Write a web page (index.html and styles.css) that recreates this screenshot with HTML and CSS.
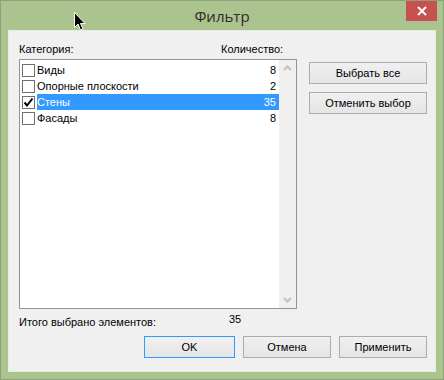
FILE: index.html
```html
<!DOCTYPE html>
<html lang="ru">
<head>
    <meta charset="UTF-8">
    <title>Фильтр</title>
    <link rel="stylesheet" href="styles.css">
</head>
<body>
    <div class="window">
        <div class="titlebar">
            <span class="title">Фильтр</span>
            <div class="close">
                <svg width="10" height="10" viewBox="0 0 10 10"><path d="M1 1 L9 9 M9 1 L1 9" stroke="#fff" stroke-width="2"/></svg>
            </div>
        </div>
        <div class="client">
            <div class="main">
                <div class="list-panel">
                    <div class="list-head">
                        <span class="head-cat">Категория:</span>
                        <span>Количество:</span>
                    </div>
                    <div class="listbox">
                        <div class="rows">
                            <div class="row">
                                <span class="check"></span>
                                <span class="item"><span>Виды</span><span>8</span></span>
                            </div>
                            <div class="row">
                                <span class="check"></span>
                                <span class="item"><span>Опорные плоскости</span><span>2</span></span>
                            </div>
                            <div class="row selected">
                                <span class="check">
                                    <svg width="11" height="11" viewBox="0 0 11 11"><path d="M1.5 5.5 L4 8.5 L9.5 1.5" fill="none" stroke="#000" stroke-width="2"/></svg>
                                </span>
                                <span class="item"><span>Стены</span><span>35</span></span>
                            </div>
                            <div class="row">
                                <span class="check"></span>
                                <span class="item"><span>Фасады</span><span>8</span></span>
                            </div>
                        </div>
                        <div class="scrollbar">
                            <svg width="17" height="17" viewBox="0 0 17 17"><path d="M5 10 L8.5 6.5 L12 10" fill="none" stroke="#c2c2c2" stroke-width="2"/></svg>
                            <svg width="17" height="17" viewBox="0 0 17 17"><path d="M5 7 L8.5 10.5 L12 7" fill="none" stroke="#c2c2c2" stroke-width="2"/></svg>
                        </div>
                    </div>
                </div>
                <div class="side-buttons">
                    <div class="btn">Выбрать все</div>
                    <div class="btn">Отменить выбор</div>
                </div>
            </div>
            <div class="total">
                <span class="total-label">Итого выбрано элементов:</span>
                <span>35</span>
            </div>
            <div class="actions">
                <div class="btn btn-ok">OK</div>
                <div class="btn btn-action">Отмена</div>
                <div class="btn btn-action">Применить</div>
            </div>
        </div>
        <svg class="cursor" width="13" height="20" viewBox="0 0 13 20">
            <path d="M0.5 0.5 L0.5 15.5 L4 12 L6.5 18 L9 17 L6.5 11.5 L11 11.5 Z" fill="#000" stroke="#fff" stroke-width="1"/>
        </svg>
    </div>
</body>
</html>
```

FILE: styles.css
```css
body {
    margin: 0;
    padding: 0;
    font-family: "Liberation Sans", Arial, sans-serif;
    font-size: 11px;
    color: #000;
}
.window {
    position: relative;
    width: 444px;
    height: 380px;
    box-sizing: border-box;
    background-color: #abc38f;
    border: 1px solid #8ea278;
    display: flex;
    flex-direction: column;
}
.titlebar {
    height: 29px;
    display: flex;
    justify-content: center;
    align-items: center;
    position: relative;
}
.title {
    font-family: "Open Sans", sans-serif;
    font-size: 15px;
    color: #2b2b2b;
    margin-top: 1px;
}
.close {
    position: absolute;
    top: 0;
    right: 6px;
    width: 31px;
    height: 20px;
    background-color: #c75050;
    display: flex;
    justify-content: center;
    align-items: center;
}
.client {
    margin: 0 7px;
    height: 342px;
    box-sizing: border-box;
    background-color: #f0f0f0;
    border: 1px solid #e4ecdc;
    padding: 12px 8px 0 10px;
    display: flex;
    flex-direction: column;
}
.main {
    display: flex;
    gap: 12px;
}
.list-panel {
    width: 278px;
}
.list-head {
    display: flex;
    line-height: 13px;
    height: 13px;
    margin-bottom: 3px;
}
.head-cat {
    width: 202px;
}
.listbox {
    height: 250px;
    box-sizing: border-box;
    border: 1px solid #8f939a;
    background-color: #fff;
    display: flex;
}
.rows {
    flex: 1;
    padding-top: 2px;
}
.row {
    height: 16px;
    display: flex;
    align-items: center;
}
.check {
    width: 11px;
    height: 11px;
    border: 1px solid #707070;
    background-color: #fff;
    margin: 0 2px 0 2px;
    display: flex;
}
.item {
    flex: 1;
    height: 16px;
    line-height: 16px;
    display: flex;
    justify-content: space-between;
    padding-right: 3px;
}
.selected .item {
    background-color: #3399ff;
    color: #fff;
}
.scrollbar {
    width: 17px;
    background-color: #f0f0f0;
    display: flex;
    flex-direction: column;
    justify-content: space-between;
}
.side-buttons {
    padding-top: 19px;
    display: flex;
    flex-direction: column;
    gap: 8px;
}
.btn {
    box-sizing: border-box;
    height: 22px;
    border: 1px solid #acacac;
    background: linear-gradient(#f0f0f0, #e5e5e5);
    display: flex;
    justify-content: center;
    align-items: center;
}
.side-buttons .btn {
    width: 118px;
}
.total {
    display: flex;
    margin-top: 4px;
    line-height: 13px;
}
.total-label {
    width: 210px;
    padding-top: 3px;
}
.actions {
    margin-top: 7px;
    display: flex;
    justify-content: flex-end;
    gap: 8px;
}
.btn-ok {
    width: 91px;
    border-color: #3399ff;
}
.btn-action {
    width: 88px;
}
.cursor {
    position: absolute;
    left: 73px;
    top: 11px;
}
```
